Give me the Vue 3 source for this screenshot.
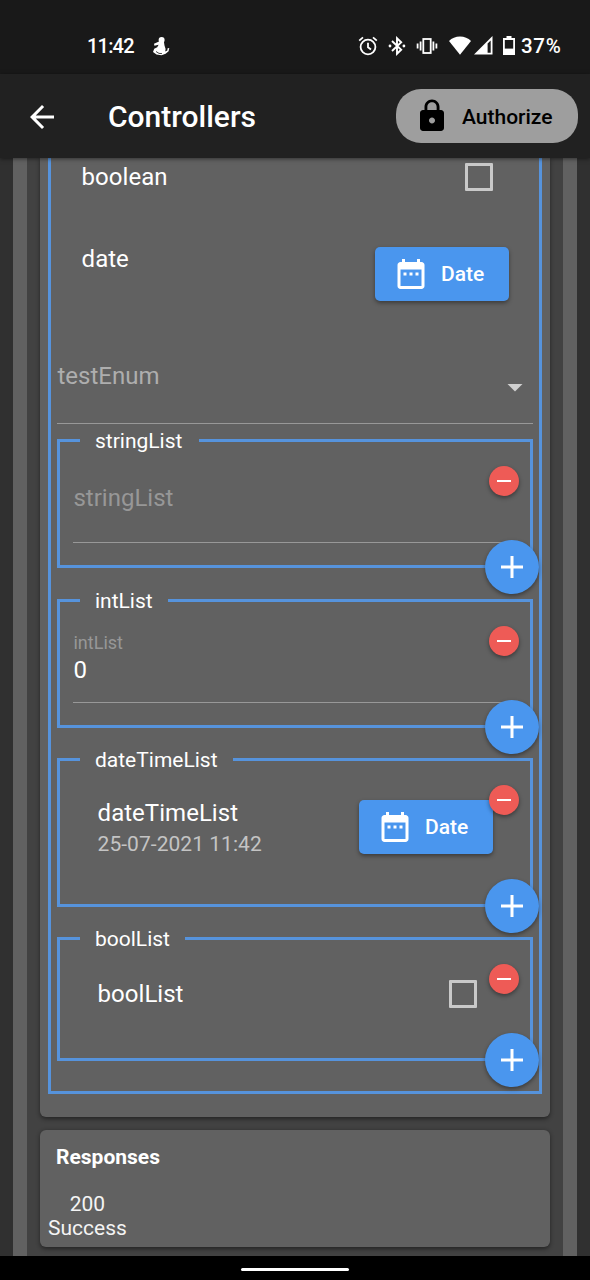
<script setup>
const lists = [
  { name: 'stringList', kind: 'text', value: '', size: 'h-string' },
  { name: 'intList', kind: 'text', value: '0', size: 'h-int' },
  { name: 'dateTimeList', kind: 'date', value: '25-07-2021 11:42', size: 'h-date' },
  { name: 'boolList', kind: 'bool', size: 'h-bool' },
]
const calendar =
  'M9 11H7v2h2v-2zm4 0h-2v2h2v-2zm4 0h-2v2h2v-2zm2-7h-1V2h-2v2H8V2H6v2H5c-1.11 0-1.99.9-1.99 2L3 20c0 1.1.89 2 2 2h14c1.1 0 2-.9 2-2V6c0-1.1-.9-2-2-2zm0 16H5V9h14v11z'
</script>

<template>
  <div class="phone">
    <header class="status">
      <span class="clock">11:42</span>
      <svg class="figure" width="18" height="20" viewBox="0 0 18 20" fill="#fff">
        <circle cx="9.6" cy="4" r="3" />
        <path d="M7 5.5 11.8 5 12.5 9.5 13.6 13 13.2 15.5 15.3 14.6 15.6 12.2 17.3 12 16.6 15.2 13.6 17.8 9.5 19.3 4.5 18.6 1 16 2.2 12.8 5.2 11.2 6.6 8.8 2.4 9.8 2 7.8Z" />
        <path d="M4 15.5 7 17.4 10 17.6" stroke="#191919" stroke-width=".8" fill="none" />
      </svg>
      <span class="grow"></span>
      <svg class="alarm" width="20" height="20" viewBox="0 0 20 20" fill="none" stroke="#fff" stroke-width="1.8">
        <circle cx="10" cy="11" r="7.4" />
        <path d="M10 6.8V11.2L13 13.4M1.2 4.6 5 1.4M18.8 4.6 15 1.4" />
      </svg>
      <svg class="bt" width="18" height="20" viewBox="0 0 18 20" fill="none" stroke="#fff" stroke-width="1.9">
        <path d="M4 5 13.2 13.8 9 17.8V2.2L13.2 6.2 4 15" />
        <circle cx="2" cy="10" r="1.4" fill="#fff" stroke="none" />
        <circle cx="15.9" cy="10" r="1.4" fill="#fff" stroke="none" />
      </svg>
      <svg class="vib" width="22" height="18" viewBox="0 0 22 18" fill="none" stroke="#fff" stroke-width="1.8">
        <rect x="7.3" y="2" width="7.4" height="14" />
        <path d="M4.6 4.5V13.5M1.6 6.5V11.5M17.4 4.5V13.5M20.4 6.5V11.5" />
      </svg>
      <svg class="wifi" width="22" height="19" viewBox="0 0 22 19" fill="#fff">
        <path d="M11 18.8 0 5C2.8 2.2 6.7.6 11 .6S19.2 2.2 22 5Z" />
      </svg>
      <svg class="cell" width="19" height="19" viewBox="0 0 19 19">
        <path d="M0 18.5 18.5 0V18.5Z" fill="#fff" />
        <path d="M13.6 7.6 16.7 4.5V16.8H13.6Z" fill="#191919" />
      </svg>
      <svg class="battery" width="12" height="19" viewBox="0 0 12 19">
        <path d="M3.5 0h5v2H12v17H0V2h3.5z" fill="#fff" />
        <rect x="1.8" y="4" width="8.4" height="8.6" fill="#191919" />
      </svg>
      <span class="percent">37%</span>
    </header>

    <nav class="appbar">
      <svg class="back" width="36" height="36" viewBox="0 0 24 24" fill="#fff">
        <path d="M20 11H7.83l5.59-5.59L12 4l-8 8 8 8 1.41-1.41L7.83 13H20v-2z" />
      </svg>
      <h1>Controllers</h1>
      <button class="authorize">
        <svg width="36" height="36" viewBox="0 0 24 24">
          <path d="M18 8h-1V6c0-2.76-2.24-5-5-5S7 3.24 7 6v2H6c-1.1 0-2 .9-2 2v10c0 1.1.9 2 2 2h12c1.1 0 2-.9 2-2V10c0-1.1-.9-2-2-2zm-6 9c-1.1 0-2-.9-2-2s.9-2 2-2 2 .9 2 2-.9 2-2 2zm3.1-9H8.9V6c0-1.71 1.39-3.1 3.1-3.1 1.71 0 3.1 1.39 3.1 3.1v2z" />
        </svg>
        <span>Authorize</span>
      </button>
    </nav>

    <main class="body">
      <div class="outer">
        <div class="inner">
          <section class="card params">
            <div class="frame">
              <div class="row bool-row">
                <span class="name">boolean</span>
                <span class="check"></span>
              </div>
              <div class="row date-row">
                <span class="name">date</span>
                <button class="date-btn">
                  <svg width="36" height="36" viewBox="0 0 24 24" fill="#fff"><path :d="calendar" /></svg>
                  <span>Date</span>
                </button>
              </div>
              <div class="enum-row">
                <span>testEnum</span>
                <svg width="36" height="36" viewBox="0 0 24 24" fill="#d0d0d0"><path d="M7 10l5 5 5-5z" /></svg>
              </div>

              <div v-for="l in lists" :key="l.name" class="list" :class="l.size">
                <span class="legend">{{ l.name }}</span>

                <div v-if="l.kind === 'text'" class="field">
                  <template v-if="l.value">
                    <span class="float">{{ l.name }}</span>
                    <span class="value">{{ l.value }}</span>
                  </template>
                  <span v-else class="hint">{{ l.name }}</span>
                </div>

                <div v-else-if="l.kind === 'date'" class="tile">
                  <div class="texts">
                    <span class="name">{{ l.name }}</span>
                    <span class="sub">{{ l.value }}</span>
                  </div>
                  <button class="date-btn">
                    <svg width="36" height="36" viewBox="0 0 24 24" fill="#fff"><path :d="calendar" /></svg>
                    <span>Date</span>
                  </button>
                </div>

                <div v-else class="tile check-tile">
                  <span class="name">{{ l.name }}</span>
                  <span class="check"></span>
                </div>

                <button class="minus">
                  <svg width="14" height="2" viewBox="0 0 14 2"><rect width="14" height="2" fill="#fff" /></svg>
                </button>
                <button class="plus">
                  <svg width="22" height="22" viewBox="0 0 22 22"><path d="M11 0V22M0 11H22" stroke="#fff" stroke-width="3" /></svg>
                </button>
              </div>
            </div>
          </section>

          <section class="card responses">
            <h2>Responses</h2>
            <div class="response">
              <span>200</span>
              <span>Success</span>
            </div>
          </section>
        </div>
      </div>
    </main>

    <footer class="gesture"><span></span></footer>
  </div>
</template>

<style>
body {
  background: #303030;
}
</style>

<style scoped>
.phone {
  width: 590px;
  height: 1280px;
  display: flex;
  flex-direction: column;
  overflow: hidden;
  background: #303030;
  color: #fff;
  font-family: Roboto, "Liberation Sans", sans-serif;
}
.phone * {
  box-sizing: border-box;
}
button {
  border: 0;
  padding: 0;
  margin: 0;
  font: inherit;
  color: inherit;
  display: flex;
  align-items: center;
}
svg {
  display: block;
  flex: none;
}
.status {
  height: 74px;
  flex: none;
  background: #191919;
  display: flex;
  align-items: center;
  padding: 17px 28px 0 86px;
  font-size: 20px;
  font-weight: 500;
}
.clock {
  width: 66px;
  letter-spacing: -0.8px;
  padding: 1px 0 0 1px;
}
.grow {
  flex: 1;
}
.alarm { margin-right: 10px; }
.bt { margin-right: 10px; }
.vib { margin-right: 11px; }
.wifi { margin-right: 3px; }
.cell { margin-right: 10px; }
.battery { margin-right: 6px; }
.percent {
  padding-top: 1px;
  font-size: 20.5px;
  letter-spacing: 0.7px;
  width: 41px;
}
.appbar {
  height: 84px;
  flex: none;
  background: #212121;
  display: flex;
  align-items: center;
  padding: 0 12px 0 24px;
  z-index: 1;
  box-shadow: 0 1px 4px rgba(0, 0, 0, 0.5);
}
.back {
  margin: 1px 48px 0 0;
}
h1 {
  margin: 0;
  flex: 1;
  font-size: 30px;
  font-weight: 500;
  line-height: 36px;
  padding-top: 2px;
}
.authorize {
  width: 182px;
  height: 54px;
  border-radius: 25px;
  background: #9e9e9e;
  color: #000;
  padding-left: 18px;
  gap: 12px;
  font-size: 21px;
  font-weight: 500;
}
.authorize span {
  padding-top: 1px;
}
.body {
  flex: 1;
  min-height: 0;
  overflow: hidden;
  padding: 0 13.4px;
}
.outer {
  height: 1098px;
  background: #616161;
  padding: 0 13.6px;
}
.inner {
  height: 100%;
  background: #424242;
  padding: 0 13.5px;
  display: flex;
  flex-direction: column;
  gap: 13px;
}
.card {
  background: #616161;
  border-radius: 6px;
  box-shadow: 0 1.5px 4px rgba(0, 0, 0, 0.45);
}
.params {
  height: 959px;
  flex: none;
  border-radius: 0 0 6px 6px;
  padding: 0 8px 0 7.5px;
}
.frame {
  height: 936px;
  border: 3px solid #5693dc;
  border-top: 0;
  padding: 0 5.5px 0 6px;
}
.name {
  font-size: 24px;
  line-height: 28px;
  padding-left: 0.6px;
  letter-spacing: 0.03px;
}
.row {
  display: flex;
  justify-content: space-between;
  padding: 0 24px;
}
.bool-row {
  height: 39px;
  padding-top: 5px;
  align-items: flex-start;
  padding-right: 40px;
}
.check {
  width: 28px;
  height: 28px;
  border: 3px solid #c9c9c9;
  border-radius: 1px;
}
.date-row {
  height: 144px;
  padding-top: 48px;
  align-items: flex-start;
}
.date-row .date-btn {
  margin-top: 1.5px;
}
.date-btn {
  width: 134px;
  height: 54px;
  border-radius: 5px;
  background: #4a96ee;
  box-shadow: 0 2px 4px rgba(0, 0, 0, 0.4);
  padding-left: 18px;
  gap: 12px;
  font-size: 21px;
  font-weight: 500;
}
.enum-row {
  height: 83px;
  border-bottom: 1.5px solid #989898;
  display: flex;
  justify-content: space-between;
  align-items: flex-start;
  padding-top: 21px;
  color: #aeaeae;
  font-size: 24px;
  line-height: 28px;
}
.enum-row span {
  padding-left: 0.5px;
}
.enum-row svg {
  margin-top: 7px;
}
.list {
  position: relative;
  border: 3px solid #5693dc;
  padding: 0 13px;
}
.h-string { height: 129px; margin-top: 15px; }
.h-int { height: 129px; margin-top: 31px; }
.h-date { height: 149px; margin-top: 30px; }
.h-bool { height: 124px; margin-top: 30px; }
.legend {
  position: absolute;
  top: -13px;
  left: 20px;
  padding: 0 15px;
  background: #616161;
  font-size: 21px;
  line-height: 25px;
}
.h-string .legend {
  padding-right: 16.5px;
}
.field {
  height: 101px;
  border-bottom: 1.5px solid #989898;
  display: flex;
  flex-direction: column;
  padding-left: 0.5px;
}
.hint {
  padding-top: 42px;
  font-size: 24px;
  line-height: 28px;
  color: #979797;
}
.float {
  padding-top: 30px;
  font-size: 18px;
  line-height: 22px;
  color: #979797;
}
.value {
  padding-top: 2px;
  font-size: 24px;
  line-height: 28px;
}
.tile {
  display: flex;
  justify-content: space-between;
  align-items: flex-start;
  padding: 38px 24px 0 24px;
}
.texts {
  display: flex;
  flex-direction: column;
}
.sub {
  font-size: 21px;
  line-height: 25px;
  margin-top: 5px;
  padding-left: 0.6px;
  letter-spacing: 0.04px;
  color: #c4c4c4;
}
.tile .date-btn {
  margin-top: 1px;
}
.check-tile {
  padding: 40px 40.4px 0 24px;
}
.minus,
.plus {
  position: absolute;
  justify-content: center;
  border-radius: 50%;
  box-shadow: 0 2px 4px rgba(0, 0, 0, 0.4);
}
.minus {
  width: 30px;
  height: 30px;
  top: 24px;
  right: 11px;
  background: #ee5b56;
}
.plus {
  width: 54px;
  height: 54px;
  right: -9px;
  bottom: -28.5px;
  background: #4a96ee;
  z-index: 1;
}
.responses {
  height: 116.5px;
  flex: none;
  padding: 15px 0 0 7px;
}
h2 {
  margin: 0 0 0 8.5px;
  font-size: 21px;
  line-height: 25px;
  font-weight: 700;
}
.response {
  display: inline-flex;
  flex-direction: column;
  align-items: center;
  margin-top: 22px;
  padding-left: 0.5px;
  font-size: 21px;
  line-height: 24px;
  color: #f4f4f4;
}
.gesture {
  height: 24px;
  flex: none;
  background: #000;
  display: flex;
  justify-content: center;
  align-items: center;
  padding-top: 2px;
}
.gesture span {
  width: 108px;
  height: 3px;
  border-radius: 2px;
  background: #fff;
}
</style>
